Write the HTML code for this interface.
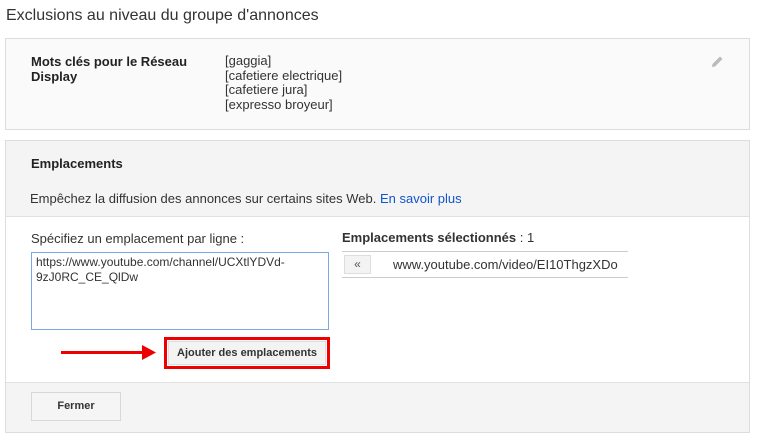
<!DOCTYPE html>
<html><head><meta charset="utf-8"><style>
body{margin:0;width:760px;height:437px;background:#fff;font-family:"Liberation Sans",Arial,sans-serif;font-size:13px;color:#222;position:relative;overflow:hidden}
.a{position:absolute}
.b{font-weight:bold}
</style></head><body>
<div class="a" style="left:6px;top:7px;font-size:16px;color:#333">Exclusions au niveau du groupe d'annonces</div>
<div class="a" style="left:5px;top:38px;width:743px;height:90px;border:1px solid #ddd;background:#fafafa"></div>
<div class="a b" style="left:31px;top:54px;line-height:15px;width:170px">Mots clés pour le Réseau<br>Display</div>
<div class="a" style="left:225px;top:54px;line-height:14.7px;color:#333">[gaggia]<br>[cafetiere electrique]<br>[cafetiere jura]<br>[expresso broyeur]</div>
<svg class="a" style="left:711px;top:55px" width="13" height="13" viewBox="0 0 13 13"><path d="M1 12 L1.5 9 L9 1.5 L11.5 4 L4 11.5 Z" fill="#bbb"/></svg>
<div class="a" style="left:5px;top:140px;width:743px;height:291px;border:1px solid #ddd;background:#f4f4f4"></div>
<div class="a" style="left:6px;top:216px;width:743px;height:165px;background:#fff;border-top:1px solid #e0e0e0;border-bottom:1px solid #e0e0e0"></div>
<div class="a b" style="left:31px;top:156px">Emplacements</div>
<div class="a" style="left:30px;top:191px;color:#333">Empêchez la diffusion des annonces sur certains sites Web. <span style="color:#15c">En savoir plus</span></div>
<div class="a" style="left:31px;top:231px;color:#333">Spécifiez un emplacement par ligne :</div>
<div class="a" style="left:31px;top:252px;width:295px;height:76px;border:1px solid #7aa7e8;font-size:12px;line-height:15px;padding:0 0 0 4px;box-sizing:border-box;width:298px;height:78px;padding-top:2px;color:#333">https://www.youtube.com/channel/UCXtlYDVd-<br>9zJ0RC_CE_QlDw</div>
<div class="a b" style="left:342px;top:230px;color:#333">Emplacements sélectionnés <span style="font-weight:normal">: 1</span></div>
<div class="a" style="left:342px;top:251px;width:286px;height:25px;border-top:1px solid #ccc;border-bottom:1px solid #ccc"></div>
<div class="a" style="left:344px;top:255px;width:25px;height:17px;border:1px solid #ddd;background:#f3f3f3;text-align:center;font-size:12px;line-height:16px;color:#555">«</div>
<div class="a" style="left:393px;top:257px;color:#333">www.youtube.com/video/EI10ThgzXDo</div>
<div class="a" style="left:61px;top:351px;width:86px;height:3px;background:#e00"></div>
<svg class="a" style="left:142px;top:345px" width="14" height="15"><path d="M0 0 L14 7.5 L0 15 Z" fill="#e00"/></svg>
<div class="a" style="left:164px;top:337px;width:166px;height:32px;border:3px solid #e00;box-sizing:border-box"></div>
<div class="a b" style="left:168px;top:341px;width:158px;height:24px;background:#f3f3f3;border:1px solid #ddd;box-sizing:border-box;text-align:center;line-height:22px;font-size:11px;color:#333">Ajouter des emplacements</div>
<div class="a b" style="left:31px;top:392px;width:90px;height:29px;background:#f5f5f5;border:1px solid #d8d8d8;box-sizing:border-box;text-align:center;line-height:27px;font-size:11px;color:#333">Fermer</div>
</body></html>
